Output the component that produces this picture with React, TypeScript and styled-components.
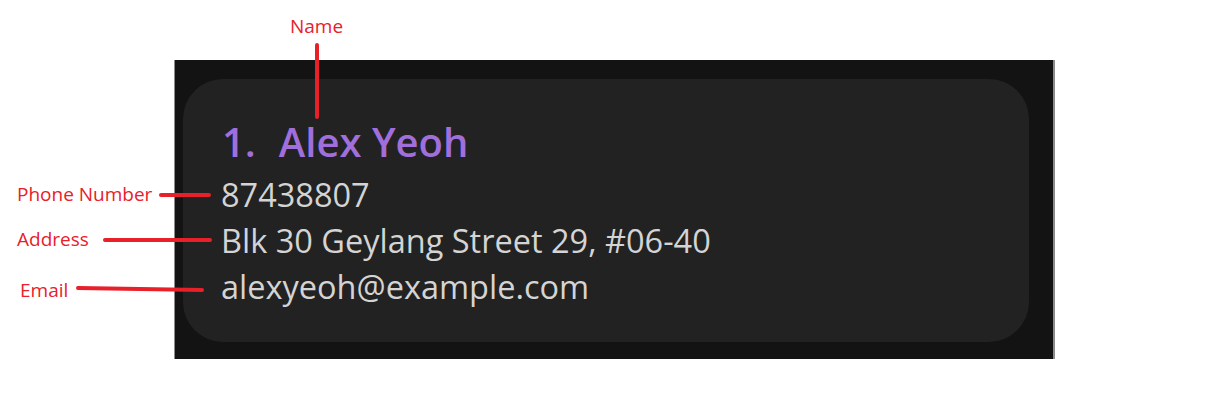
import React from "react";
import styled, { createGlobalStyle } from "styled-components";

const Global = createGlobalStyle`
  html, body { margin: 0; padding: 0; background: #ffffff; }
  body { font-family: "Open Sans", "Liberation Sans", sans-serif; }
`;

const Stage = styled.div`
  position: relative;
  width: 1232px;
  height: 420px;
  overflow: hidden;
  background: #ffffff;
  padding: 60px 0 0 174px;
  box-sizing: border-box;
`;

const Panel = styled.div`
  width: 881px;
  height: 299px;
  box-sizing: border-box;
  background: #131313;
  border-left: 1px solid #8c8c8c;
  border-right: 2px solid #8c8c8c;
  padding: 19px 24px 17px 8px;
  display: flex;
`;

const Card = styled.div`
  flex: 1;
  background: #222222;
  border-radius: 40px;
  padding: 33px 0 0 38px;
  display: flex;
  flex-direction: column;
`;

const NameRow = styled.div`
  display: flex;
  align-items: baseline;
  gap: 23px;
  font-family: "Open Sans", "Liberation Sans", sans-serif;
  font-weight: 600;
  font-size: 40px;
  line-height: 60px;
  color: #a06fdc;
  margin-left: 1px;
`;

const Field = styled.div`
  font-family: "Open Sans", "Liberation Sans", sans-serif;
  font-size: 32.5px;
  line-height: 46px;
  color: #d4d4d4;
`;

const Label = styled.div<{ $x: number; $y: number }>`
  position: absolute;
  left: ${(p) => p.$x}px;
  top: ${(p) => p.$y}px;
  font-family: "Open Sans", "Liberation Sans", sans-serif;
  font-size: 19px;
  line-height: 22px;
  color: #e8202a;
  white-space: nowrap;
`;

const Overlay = styled.svg`
  position: absolute;
  left: 0;
  top: 0;
  pointer-events: none;
`;

const lines: [number, number, number, number][] = [
  [317, 45, 317, 117],
  [161, 195, 209, 195],
  [105, 240, 210, 240],
  [78, 288, 202, 290],
];

export default function App() {
  return (
    <>
      <Global />
      <Stage>
        <Panel>
          <Card>
            <NameRow>
              <span>1.</span>
              <span>Alex Yeoh</span>
            </NameRow>
            <Field>87438807</Field>
            <Field>Blk 30 Geylang Street 29, #06-40</Field>
            <Field>alexyeoh@example.com</Field>
          </Card>
        </Panel>
        <Label $x={290} $y={15}>Name</Label>
        <Label $x={17} $y={183}>Phone Number</Label>
        <Label $x={17} $y={228}>Address</Label>
        <Label $x={20} $y={279}>Email</Label>
        <Overlay width={1232} height={420} viewBox="0 0 1232 420">
          {lines.map(([x1, y1, x2, y2], i) => (
            <line
              key={i}
              x1={x1}
              y1={y1}
              x2={x2}
              y2={y2}
              stroke="#e8202a"
              strokeWidth={4}
              strokeLinecap="round"
            />
          ))}
        </Overlay>
      </Stage>
    </>
  );
}
